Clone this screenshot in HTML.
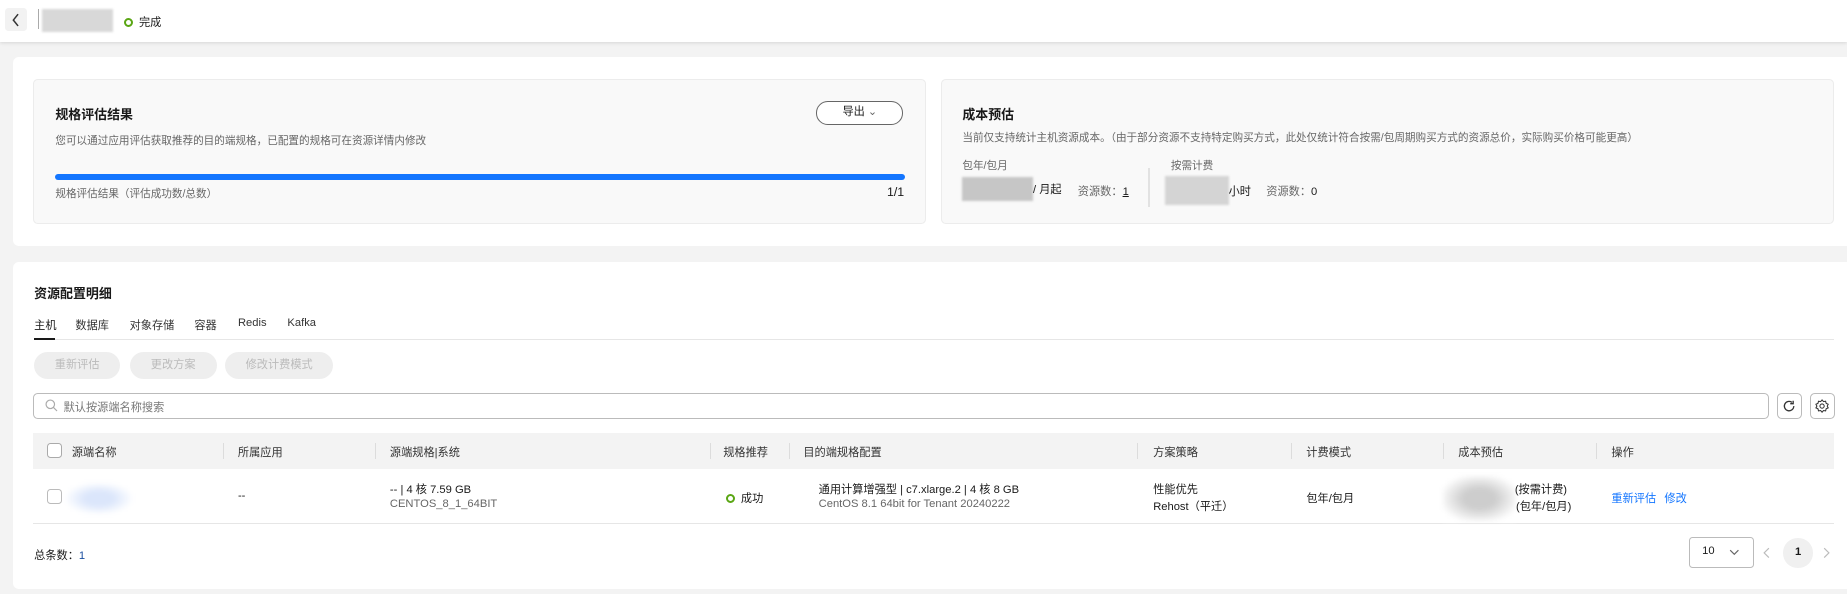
<!DOCTYPE html>
<html><head><meta charset="utf-8">
<style>
html{zoom:1.17793}
*{box-sizing:border-box;margin:0;padding:0}
body{width:1568px;height:504px;overflow:hidden;background:#f3f3f3;font-family:"Liberation Sans","Noto Sans CJK SC",sans-serif;font-size:9.5px;color:#191919;position:relative}
.a{position:absolute;white-space:nowrap}
.g{color:#666}
.blur{position:absolute;background:linear-gradient(90deg,#e8e8e8,#cfcfcf 50%,#e0e0e0);filter:blur(1px)}
.sep{position:absolute;width:1px;height:14px;background:#dcdcdc;top:8px}
.th{position:absolute;top:9px;color:#333}
.btn{position:absolute;height:23px;border-radius:12px;background:#eeeeee;color:#bbb;text-align:center;line-height:23px}
.ok{display:inline-block;width:8px;height:8px;border:2px solid #5aa614;border-radius:50%;vertical-align:-1px;margin-right:5px}
</style></head><body>
<div class="a" style="left:0;top:0;width:1568px;height:36px;background:#fff;box-shadow:0 1px 3px rgba(0,0,0,.12)"></div>
<div class="a" style="left:4px;top:7px;width:19px;height:19px;background:#f2f2f2;border-radius:3px"></div>
<svg class="a" style="left:9px;top:11px" width="8" height="12" viewBox="0 0 8 12"><path d="M6 1L2 6l4 5" fill="none" stroke="#333" stroke-width="1.3"/></svg>
<div class="a" style="left:32px;top:8px;width:1px;height:17px;background:#aaa"></div>
<div class="blur" style="left:36px;top:8px;width:60px;height:19px;background:#d8d8d8"></div>
<div class="a" style="left:105px;top:12px"><span class="ok"></span>完成</div>

<div class="a" style="left:11px;top:48px;width:1570px;height:161px;background:#fff;border-radius:5px"></div>
<div class="a" style="left:28px;top:67px;width:758px;height:123px;background:#f9f9f9;border:1px solid #ececec;border-radius:4px"></div>
<div class="a" style="left:47px;top:88px;font-size:11px;font-weight:bold">规格评估结果</div>
<div class="a g" style="left:47px;top:113px;font-size:9px">您可以通过应用评估获取推荐的目的端规格，已配置的规格可在资源详情内修改</div>
<div class="a" style="left:693px;top:86px;width:74px;height:20px;border:1px solid #666;border-radius:10px;background:#fff;text-align:center;line-height:18px">导出 <span style="color:#666">&#8964;</span></div>
<div class="a" style="left:47px;top:148px;width:721px;height:5px;background:#1476ff;border-radius:3px"></div>
<div class="a g" style="left:47px;top:158px;font-size:9px">规格评估结果（评估成功数/总数）</div>
<div class="a" style="left:753px;top:157px;font-size:10.5px">1/1</div>

<div class="a" style="left:799px;top:67px;width:758px;height:123px;background:#f9f9f9;border:1px solid #ececec;border-radius:4px"></div>
<div class="a" style="left:817px;top:88px;font-size:11px;font-weight:bold">成本预估</div>
<div class="a g" style="left:817px;top:110px;font-size:9px">当前仅支持统计主机资源成本。（由于部分资源不支持特定购买方式，此处仅统计符合按需/包周期购买方式的资源总价，实际购买价格可能更高）</div>
<div class="a g" style="left:817px;top:134px;font-size:9px">包年/包月</div>
<div class="blur" style="left:817px;top:150px;width:60px;height:21px;background:#c6c6c6"></div>
<div class="a" style="left:877px;top:154px">/ 月起</div>
<div class="a" style="left:915px;top:155px"><span class="g">资源数：</span><u>1</u></div>
<div class="a" style="left:975px;top:143px;width:1px;height:33px;background:#e2e2e2"></div>
<div class="a g" style="left:994px;top:134px;font-size:9px">按需计费</div>
<div class="blur" style="left:989px;top:149px;width:54px;height:25px;background:#d4d4d4"></div>
<div class="a" style="left:1043px;top:155px">小时</div>
<div class="a" style="left:1075px;top:155px"><span class="g">资源数：</span>0</div>

<div class="a" style="left:11px;top:222px;width:1570px;height:278px;background:#fff;border-radius:5px"></div>
<div class="a" style="left:29px;top:240px;font-size:11px;font-weight:bold">资源配置明细</div>
<div class="a" style="left:29px;top:288px;width:1528px;height:1px;background:#e6e6e6"></div>
<div class="a" style="left:29px;top:269px">主机</div>
<div class="a" style="left:29px;top:287px;width:18px;height:2px;background:#191919"></div>
<div class="a" style="left:64px;top:269px;color:#333">数据库</div>
<div class="a" style="left:110px;top:269px;color:#333">对象存储</div>
<div class="a" style="left:165px;top:269px;color:#333">容器</div>
<div class="a" style="left:202px;top:269px;color:#333">Redis</div>
<div class="a" style="left:244px;top:269px;color:#333">Kafka</div>
<div class="btn" style="left:29px;top:299px;width:73px">重新评估</div>
<div class="btn" style="left:110px;top:299px;width:74px">更改方案</div>
<div class="btn" style="left:191px;top:299px;width:92px">修改计费模式</div>

<div class="a" style="left:28px;top:334px;width:1474px;height:22px;border:1px solid #bbb;border-radius:4px;background:#fff"></div>
<svg class="a" style="left:38px;top:339px" width="11" height="11" viewBox="0 0 11 11"><circle cx="4.5" cy="4.5" r="3.6" fill="none" stroke="#aaa"/><path d="M7.2 7.2l3 3" stroke="#aaa"/></svg>
<div class="a" style="left:54px;top:339px;color:#777">默认按源端名称搜索</div>
<div class="a" style="left:1509px;top:334px;width:21px;height:22px;border:1px solid #bbb;border-radius:4px"></div>
<svg class="a" style="left:1513px;top:339px" width="12" height="12" viewBox="0 0 12 12"><path d="M10 6a4 4 0 1 1-1.5-3.1M9.5 1.5v2.5H7" fill="none" stroke="#333" stroke-width="1.1"/></svg>
<div class="a" style="left:1537px;top:334px;width:21px;height:22px;border:1px solid #bbb;border-radius:4px"></div>
<svg class="a" style="left:1541px;top:339px" width="12" height="12" viewBox="0 0 12 12"><path d="M6 .8l1.2 1.4 1.8-.3.5 1.8 1.7.8-.8 1.5.8 1.5-1.7.8-.5 1.8-1.8-.3L6 11.2 4.8 9.8 3 10.1l-.5-1.8-1.7-.8L1.6 6 .8 4.5l1.7-.8L3 1.9l1.8.3z" fill="none" stroke="#333" stroke-width=".9"/><circle cx="6" cy="6" r="1.8" fill="none" stroke="#333" stroke-width=".9"/></svg>

<div class="a" style="left:28px;top:368px;width:1529px;height:30px;background:#f3f3f3">
<div class="a" style="left:12px;top:8px;width:13px;height:13px;border:1px solid #aaa;border-radius:3px;background:#fff"></div>
<div class="th" style="left:33px">源端名称</div><div class="sep" style="left:161px"></div>
<div class="th" style="left:174px">所属应用</div><div class="sep" style="left:290px"></div>
<div class="th" style="left:303px">源端规格|系统</div><div class="sep" style="left:575px"></div>
<div class="th" style="left:586px">规格推荐</div><div class="sep" style="left:642px"></div>
<div class="th" style="left:654px">目的端规格配置</div><div class="sep" style="left:937px"></div>
<div class="th" style="left:951px">方案策略</div><div class="sep" style="left:1068px"></div>
<div class="th" style="left:1081px">计费模式</div><div class="sep" style="left:1197px"></div>
<div class="th" style="left:1210px">成本预估</div><div class="sep" style="left:1327px"></div>
<div class="th" style="left:1340px">操作</div>
</div>
<div class="a" style="left:28px;top:444px;width:1529px;height:1px;background:#e6e6e6"></div>
<div class="a" style="left:40px;top:415px;width:13px;height:13px;border:1px solid #bbb;border-radius:3px"></div>
<div class="blur" style="left:56px;top:410px;width:56px;height:26px;background:radial-gradient(ellipse,#dbe6fb 30%,#fff 75%);filter:blur(2px)"></div>
<div class="a" style="left:202px;top:416px">--</div>
<div class="a" style="left:331px;top:408px">-- | 4 核 7.59 GB</div>
<div class="a g" style="left:331px;top:423px">CENTOS_8_1_64BIT</div>
<div class="a" style="left:616px;top:416px"><span class="ok"></span>成功</div>
<div class="a" style="left:695px;top:408px">通用计算增强型 | c7.xlarge.2 | 4 核 8 GB</div>
<div class="a g" style="left:695px;top:423px">CentOS 8.1 64bit for Tenant 20240222</div>
<div class="a" style="left:979px;top:408px">性能优先</div>
<div class="a" style="left:979px;top:423px">Rehost（平迁）</div>
<div class="a" style="left:1109px;top:416px">包年/包月</div>
<div class="blur" style="left:1225px;top:404px;width:62px;height:38px;background:radial-gradient(ellipse,#cdcdcd 30%,#fff 80%);filter:blur(2px)"></div>
<div class="a" style="left:1286px;top:408px">(按需计费)</div>
<div class="a" style="left:1287px;top:423px">(包年/包月)</div>
<div class="a" style="left:1368px;top:416px;color:#1476ff">重新评估</div>
<div class="a" style="left:1413px;top:416px;color:#1476ff">修改</div>

<div class="a" style="left:29px;top:464px">总条数：<span style="color:#1a4fa0">1</span></div>
<div class="a" style="left:1434px;top:456px;width:55px;height:26px;border:1px solid #bbb;border-radius:3px"></div>
<div class="a" style="left:1445px;top:463px">10</div>
<svg class="a" style="left:1468px;top:466px" width="9" height="6" viewBox="0 0 9 6"><path d="M1 1l3.5 3.5L8 1" fill="none" stroke="#666"/></svg>
<svg class="a" style="left:1497px;top:464px" width="6" height="10" viewBox="0 0 6 10"><path d="M5 1L1 5l4 4" fill="none" stroke="#bbb"/></svg>
<div class="a" style="left:1514px;top:457px;width:25px;height:25px;border-radius:50%;background:#f0f0f0;text-align:center;line-height:25px;font-weight:bold">1</div>
<svg class="a" style="left:1548px;top:464px" width="6" height="10" viewBox="0 0 6 10"><path d="M1 1l4 4-4 4" fill="none" stroke="#bbb"/></svg>
</body></html>
